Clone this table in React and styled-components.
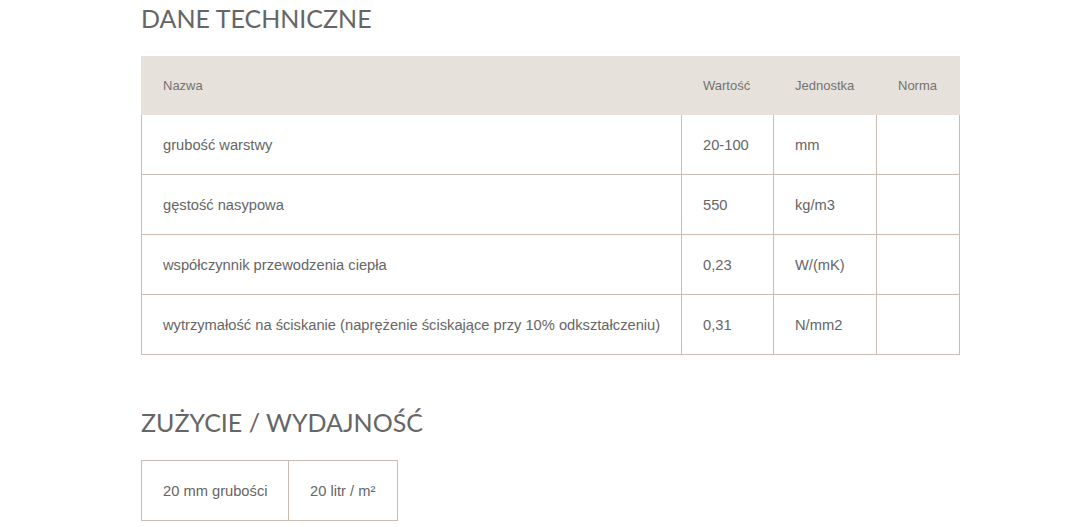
import React from 'react'
import styled, { createGlobalStyle } from 'styled-components'

const GlobalStyle = createGlobalStyle`
  body {
    margin: 0;
    background: #fff;
    font-family: "Liberation Sans", Arial, sans-serif;
    color: #666;
  }
`

const Page = styled.div`
  padding: 0 0 0 141px;
  width: 819px;
`

const Heading = styled.h2`
  margin: 0;
  padding-top: ${p => p.$top}px;
  height: ${p => p.$height}px;
  box-sizing: border-box;
  font-family: Lato, "Open Sans", sans-serif;
  font-weight: 400;
  font-size: 25px;
  line-height: 36px;
  color: #666;
  text-transform: uppercase;
`

const Table = styled.table`
  border-collapse: collapse;
  width: ${p => p.$width}px;
  table-layout: fixed;
`

const HeadCell = styled.th`
  background: #e6e1da;
  border: 1px solid #e6e1da;
  height: 57px;
  padding: 0 0 0 21px;
  text-align: left;
  font-weight: 400;
  font-size: 13px;
  color: #737373;
`

const Cell = styled.td`
  border: 1px solid #cbbdb2;
  height: 59px;
  padding: 0 0 0 21px;
  font-size: 14.7px;
  color: #666;
`

const specs = [
  ['grubość warstwy', '20-100', 'mm', ''],
  ['gęstość nasypowa', '550', 'kg/m3', ''],
  ['współczynnik przewodzenia ciepła', '0,23', 'W/(mK)', ''],
  ['wytrzymałość na ściskanie (naprężenie ściskające przy 10% odkształczeniu)', '0,31', 'N/mm2', ''],
]

export default function App() {
  return (
    <>
      <GlobalStyle />
      <Page>
        <Heading $top={0} $height={56}>Dane techniczne</Heading>
        <Table $width={818}>
          <colgroup>
            <col style={{ width: 540 }} />
            <col style={{ width: 92 }} />
            <col style={{ width: 103 }} />
            <col style={{ width: 83 }} />
          </colgroup>
          <thead>
            <tr>
              <HeadCell>Nazwa</HeadCell>
              <HeadCell>Wartość</HeadCell>
              <HeadCell>Jednostka</HeadCell>
              <HeadCell>Norma</HeadCell>
            </tr>
          </thead>
          <tbody>
            {specs.map((row, i) => (
              <tr key={i}>
                {row.map((c, j) => <Cell key={j}>{c}</Cell>)}
              </tr>
            ))}
          </tbody>
        </Table>
        <Heading $top={49} $height={105}>Zużycie / wydajność</Heading>
        <Table $width={256}>
          <colgroup>
            <col style={{ width: 147 }} />
            <col style={{ width: 109 }} />
          </colgroup>
          <tbody>
            <tr>
              <Cell>20 mm grubości</Cell>
              <Cell>20 litr / m²</Cell>
            </tr>
          </tbody>
        </Table>
      </Page>
    </>
  )
}
